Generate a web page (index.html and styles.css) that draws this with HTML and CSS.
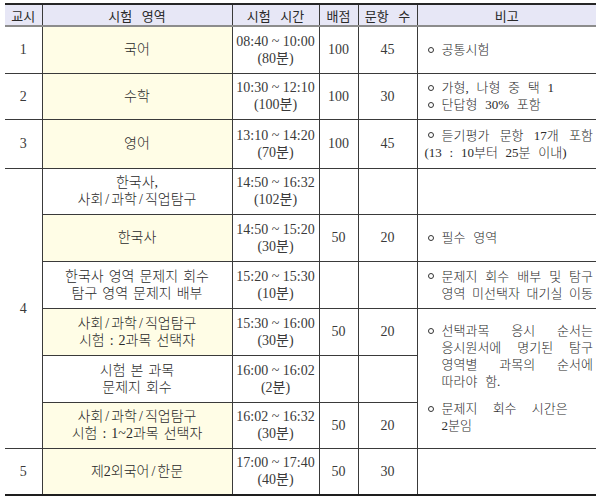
FILE: index.html
```html
<!DOCTYPE html>
<html lang="ko">
<head>
<meta charset="utf-8">
<title>수능 시험 시간표</title>
<link rel="stylesheet" href="styles.css">
</head>
<body>
<div class="wrap">
<table class="sched">
  <colgroup>
    <col class="w1"><col class="w2"><col class="w3"><col class="w4"><col class="w5"><col class="w6">
  </colgroup>
  <thead>
    <tr>
      <th class="c1">교시</th>
      <th>시험 영역</th>
      <th>시험 시간</th>
      <th>배점</th>
      <th>문항 수</th>
      <th class="c6">비고</th>
    </tr>
  </thead>
  <tbody>
    <tr class="h47">
      <td class="c1 num">1</td>
      <td class="ko yel">국어</td>
      <td class="tm">08:40 ~ 10:00<br>(80분)</td>
      <td class="num">100</td>
      <td class="num">45</td>
      <td class="c6 rm"><div class="note"><span class="bb"><span class="b"></span></span><div class="tx">공통시험</div></div></td>
    </tr>
    <tr class="h46">
      <td class="c1 num">2</td>
      <td class="ko yel">수학</td>
      <td class="tm">10:30 ~ 12:10<br>(100분)</td>
      <td class="num">100</td>
      <td class="num">30</td>
      <td class="c6 rm">
        <div class="note"><span class="bb"><span class="b"></span></span><div class="tx">가형, 나형 중 택 1</div></div>
        <div class="note"><span class="bb"><span class="b"></span></span><div class="tx">단답형 30% 포함</div></div>
      </td>
    </tr>
    <tr class="h49">
      <td class="c1 num">3</td>
      <td class="ko yel">영어</td>
      <td class="tm">13:10 ~ 14:20<br>(70분)</td>
      <td class="num">100</td>
      <td class="num">45</td>
      <td class="c6 rm">
        <div class="note"><span class="bb"><span class="b"></span></span><div class="tx"><div class="j">듣기평가 문항 17개 포함</div></div></div>
        <div class="out">(13 : 10부터 25분 이내)</div>
      </td>
    </tr>
    <tr class="h46">
      <td class="c1 num" rowspan="6">4</td>
      <td class="ko">한국사,<br>사회<span class="sl">/</span>과학<span class="sl">/</span>직업탐구</td>
      <td class="tm">14:50 ~ 16:32<br>(102분)</td>
      <td class="num"></td>
      <td class="num"></td>
      <td class="c6 rm"></td>
    </tr>
    <tr class="h47">
      <td class="ko yel">한국사</td>
      <td class="tm">14:50 ~ 15:20<br>(30분)</td>
      <td class="num">50</td>
      <td class="num">20</td>
      <td class="c6 rm"><div class="note"><span class="bb"><span class="b"></span></span><div class="tx">필수 영역</div></div></td>
    </tr>
    <tr class="h47">
      <td class="ko">한국사 영역 문제지 회수<br>탐구 영역 문제지 배부</td>
      <td class="tm">15:20 ~ 15:30<br>(10분)</td>
      <td class="num"></td>
      <td class="num"></td>
      <td class="c6 rm">
        <div class="note"><span class="bb"><span class="b"></span></span><div class="tx"><div class="j">문제지 회수 배부 및 탐구</div><div class="j">영역 미선택자 대기실 이동</div></div></div>
      </td>
    </tr>
    <tr class="h47">
      <td class="ko yel">사회<span class="sl">/</span>과학<span class="sl">/</span>직업탐구<br>시험 : 2과목 선택자</td>
      <td class="tm">15:30 ~ 16:00<br>(30분)</td>
      <td class="num">50</td>
      <td class="num">20</td>
      <td class="c6 rm" rowspan="3">
        <div class="note"><span class="bb"><span class="b"></span></span><div class="tx"><div class="j">선택과목 응시 순서는</div><div class="j">응시원서에 명기된 탐구</div><div class="j">영역별 과목의 순서에</div><div>따라야 함.</div></div></div>
        <div class="note gap"><span class="bb"><span class="b"></span></span><div class="tx"><div class="wide">문제지 회수 시간은</div><div>2분임</div></div></div>
      </td>
    </tr>
    <tr class="h47">
      <td class="ko">시험 본 과목<br>문제지 회수</td>
      <td class="tm">16:00 ~ 16:02<br>(2분)</td>
      <td class="num"></td>
      <td class="num"></td>
    </tr>
    <tr class="h46">
      <td class="ko yel">사회<span class="sl">/</span>과학<span class="sl">/</span>직업탐구<br>시험 : 1~2과목 선택자</td>
      <td class="tm">16:02 ~ 16:32<br>(30분)</td>
      <td class="num">50</td>
      <td class="num">20</td>
    </tr>
    <tr class="h47 last">
      <td class="c1 num">5</td>
      <td class="ko yel">제2외국어<span class="sl">/</span>한문</td>
      <td class="tm">17:00 ~ 17:40<br>(40분)</td>
      <td class="num">50</td>
      <td class="num">30</td>
      <td class="c6 rm"></td>
    </tr>
  </tbody>
</table>
</div>
</body>
</html>
```

FILE: styles.css
```css
body {
  margin: 0;
  background: #ffffff;
}

.wrap {
  padding: 3px 0 0 5px;
}

.sched {
  border-collapse: collapse;
  table-layout: fixed;
  width: 591px;
  font-family: "Liberation Serif", "Noto Sans CJK KR", serif;
  font-size: 14px;
  color: #3a3a3a;
}

.w1 { width: 37px; }
.w2 { width: 190px; }
.w3 { width: 87px; }
.w4 { width: 39px; }
.w5 { width: 59px; }
.w6 { width: 179px; }

.sched th,
.sched td {
  border: 1px solid #3a3a3a;
  padding: 0;
  text-align: center;
  vertical-align: middle;
  line-height: 17px;
}

.sched thead tr { height: 22px; }

.sched th {
  background: #e7e7f6;
  font-family: "Noto Sans CJK KR", sans-serif;
  font-weight: 400;
  font-size: 13px;
  word-spacing: 6px;
  color: #2a2a2a;
  border-top: 2px solid #262626;
  border-bottom: 2px solid #8c8c8c;
}

.sched .c1 { border-left: none; }
.sched .c6 { border-right: none; }

.h46 { height: 46px; }
.h47 { height: 47px; }
.h49 { height: 49px; }

.sched .last td { border-bottom: 2px solid #1e1e1e; }

.yel { background: #fffde6; }

.ko {
  font-size: 14px;
  word-spacing: 1.5px;
  font-weight: 300;
  color: #2a2a2a;
}

.sl { margin: 0 2px; }

.num { font-size: 14px; }

.tm {
  font-size: 14px;
  line-height: 17px;
}

.sched .rm {
  text-align: left;
  padding: 0 3px 0 10px;
  font-size: 13px;
  font-weight: 300;
  word-spacing: 4.5px;
  color: #2a2a2a;
}

.note {
  display: flex;
  align-items: flex-start;
}

.note.gap { margin-top: 10px; }

.bb {
  flex: 0 0 14px;
  height: 17px;
  display: flex;
  align-items: center;
}

.b {
  width: 4px;
  height: 4px;
  border: 1px solid #333333;
  border-radius: 50%;
}

.tx { flex: 1; }

.j {
  text-align: justify;
  text-align-last: justify;
  word-spacing: 0;
}

.wide { word-spacing: 12px; }

.out {
  margin-left: -3px;
  white-space: nowrap;
}
```
